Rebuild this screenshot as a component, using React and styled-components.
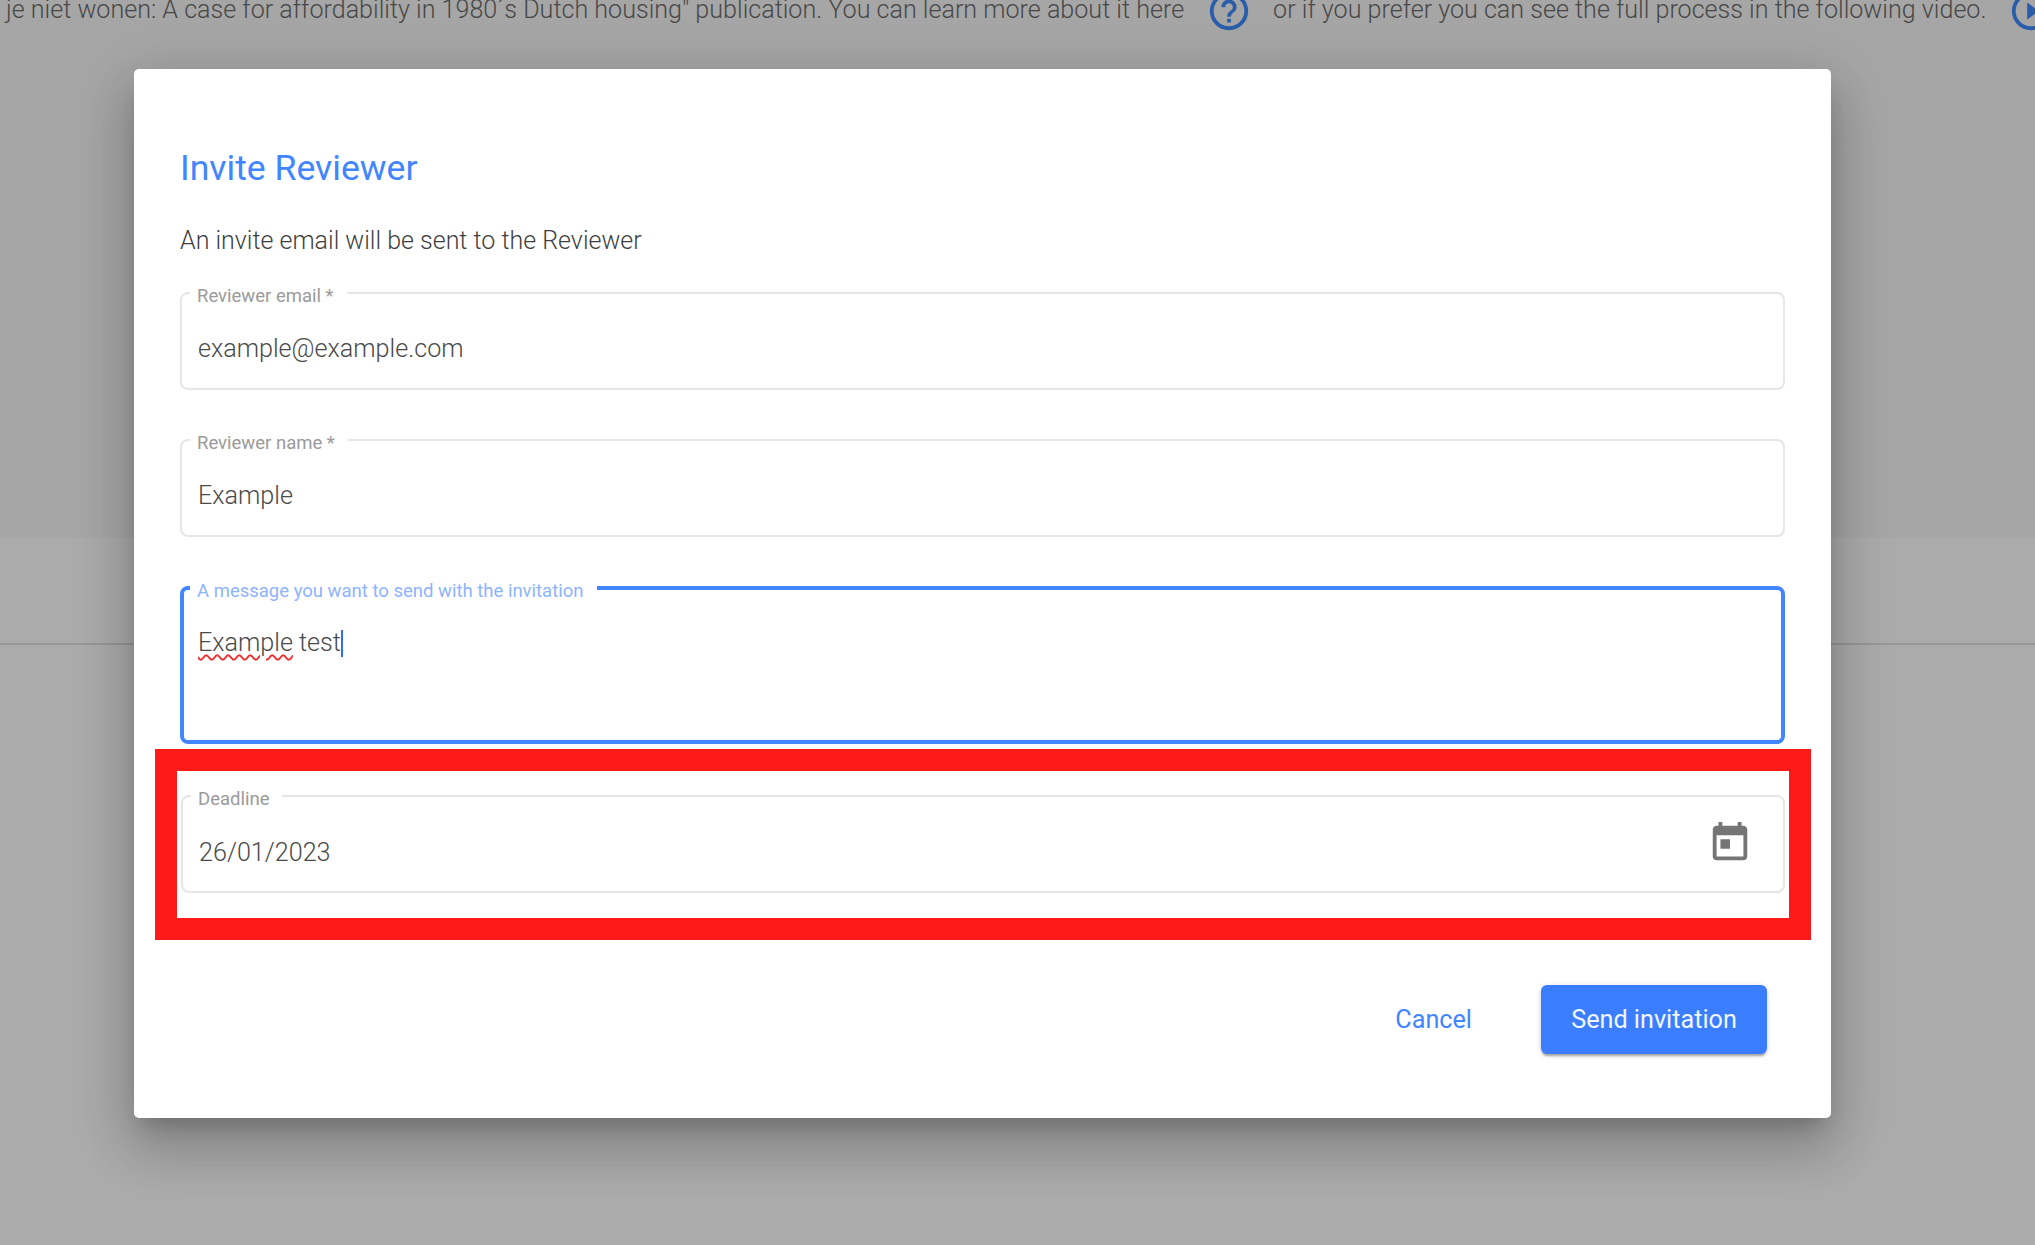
import React from 'react';
import styled, { createGlobalStyle } from 'styled-components';

const GlobalStyle = createGlobalStyle`
  html, body {
    margin: 0;
    padding: 0;
  }

  * {
    box-sizing: border-box;
  }

  body {
    font-family: Roboto, "Liberation Sans", sans-serif;
    background: #ffffff;
  }
`;

const Page = styled.div`
  position: relative;
  width: 2035px;
  height: 1245px;
  overflow: hidden;
  background: #ffffff;
`;

const TopSection = styled.section`
  display: flow-root;
  height: 538px;
  background: #f8f8f8;
`;

const IntroRow = styled.div`
  display: flex;
  align-items: center;
  gap: 21.5px;
  height: 46px;
  margin-top: -12px;
  padding-left: 6px;
  font-size: 25.1px;
  font-weight: 300;
  color: #6c6c6c;
  white-space: nowrap;
`;

const IntroText = styled.span`
  margin-bottom: 3px;
`;

const IntroIcon = styled.svg`
  flex: 0 0 46px;
  width: 46px;
  height: 46px;
  fill: #3f8cff;
`;

const MidSection = styled.section`
  height: 107px;
  border-bottom: 2px solid #e2e2e2;
`;

const Backdrop = styled.div`
  position: absolute;
  inset: 0;
  padding: 69px 0 0 134px;
  background: rgba(0, 0, 0, 0.33);
`;

const Dialog = styled.div`
  width: 1697px;
  height: 1049px;
  padding: 77px 46px 0;
  background: #ffffff;
  border-radius: 5px;
  box-shadow: 0 14px 20px -9px rgba(0, 0, 0, 0.2), 0 31px 49px 4px rgba(0, 0, 0, 0.14),
    0 12px 60px 10px rgba(0, 0, 0, 0.12);
`;

const Title = styled.h2`
  margin: 0;
  font-size: 35.6px;
  line-height: 44px;
  font-weight: 400;
  color: #4286ff;
`;

const Subtitle = styled.p`
  margin: 33px 0 0;
  font-size: 25px;
  line-height: 36px;
  font-weight: 300;
  color: #3f3f3f;
`;

const Fields = styled.div`
  display: flex;
  flex-direction: column;
  gap: 49px;
  margin-top: 33px;
`;

const Field = styled.fieldset`
  display: block;
  width: 100%;
  height: ${(p) => p.$height}px;
  margin: 0;
  padding: 0 15px 0 ${(p) => (p.$focused ? 14 : 16)}px;
  min-width: 0;
  border: ${(p) => (p.$focused ? '4px solid #4286ff' : '2px solid #e6e6e6')};
  border-radius: 8px;
`;

const Label = styled.legend`
  height: ${(p) => (p.$focused ? 4 : 2)}px;
  margin-left: -8px;
  padding: 0 13px 0 7px;
  font-size: 18.5px;
  line-height: ${(p) => (p.$focused ? 10 : 9)}px;
  font-weight: 400;
  color: ${(p) => (p.$focused ? '#8db4ff' : '#9a9a9a')};
`;

const Value = styled.div`
  margin-top: ${(p) => p.$top}px;
  font-size: 25.15px;
  line-height: 36px;
  font-weight: 300;
  color: #4a4a4a;
`;

const Misspelled = styled.span`
  text-decoration: underline wavy #f03030 1.5px;
  text-underline-offset: 3px;
`;

const Caret = styled.span`
  display: inline-block;
  width: 2px;
  height: 27px;
  vertical-align: -6px;
  background: #2f6fe8;
`;

const Highlight = styled.div`
  margin: 5px -26px 0 -25px;
  padding: 24px 4px 25px 4px;
  border: 22px solid #ff1a1a;
`;

const DateRow = styled.div`
  display: flex;
  justify-content: space-between;
  align-items: flex-start;
`;

const CalendarIcon = styled.svg`
  width: 46px;
  height: 46px;
  margin: 23px 15px 0 0;
  fill: #757575;
`;

const Actions = styled.div`
  display: flex;
  justify-content: flex-end;
  align-items: center;
  gap: 69px;
  margin: 45px 18px 0 0;
`;

const TextButton = styled.button`
  padding: 0;
  border: 0;
  background: none;
  font-family: inherit;
  font-size: 25.2px;
  font-weight: 400;
  color: #4286ff;
`;

const PrimaryButton = styled.button`
  width: 226px;
  height: 69px;
  padding: 0;
  border: 0;
  border-radius: 6px;
  background: #3a7eff;
  font-family: inherit;
  font-size: 25.2px;
  font-weight: 400;
  color: #f2f6ff;
  box-shadow: 0 4px 2px -2px rgba(0, 0, 0, 0.2), 0 2px 3px 0 rgba(0, 0, 0, 0.14),
    0 1px 6px 0 rgba(0, 0, 0, 0.12);
`;

const helpPath =
  'M11 18h2v-2h-2v2zm1-16C6.48 2 2 6.48 2 12s4.48 10 10 10 10-4.48 10-10S17.52 2 12 2zm0 18c-4.41 0-8-3.59-8-8s3.59-8 8-8 8 3.59 8 8-3.59 8-8 8zm0-14c-2.21 0-4 1.79-4 4h2c0-1.1.9-2 2-2s2 .9 2 2c0 2-3 1.75-3 5h2c0-2.25 3-2.5 3-5 0-2.21-1.79-4-4-4z';
const playPath =
  'M10 16.5l6-4.5-6-4.5v9zM12 2C6.48 2 2 6.48 2 12s4.48 10 10 10 10-4.48 10-10S17.52 2 12 2zm0 18c-4.41 0-8-3.59-8-8s3.59-8 8-8 8 3.59 8 8-3.59 8-8 8z';
const todayPath =
  'M19 3h-1V1h-2v2H8V1H6v2H5c-1.11 0-1.99.9-1.99 2L3 19c0 1.1.89 2 2 2h14c1.1 0 2-.9 2-2V5c0-1.1-.9-2-2-2zm0 16H5V8h14v11zM7 10h5v5H7z';

export default function App() {
  return (
    <Page>
      <GlobalStyle />
      <TopSection>
        <IntroRow>
          <IntroText>
            je niet wonen: A case for affordability in 1980´s Dutch housing" publication. You can
            learn more about it here
          </IntroText>
          <IntroIcon viewBox="0 0 24 24">
            <path d={helpPath} />
          </IntroIcon>
          <IntroText>or if you prefer you can see the full process in the following video.</IntroText>
          <IntroIcon viewBox="0 0 24 24">
            <path d={playPath} />
          </IntroIcon>
        </IntroRow>
      </TopSection>
      <MidSection />

      <Backdrop>
        <Dialog>
          <Title>Invite Reviewer</Title>
          <Subtitle>An invite email will be sent to the Reviewer</Subtitle>
          <Fields>
            <Field $height={98}>
              <Label>Reviewer email *</Label>
              <Value $top={37}>example@example.com</Value>
            </Field>
            <Field $height={98}>
              <Label>Reviewer name *</Label>
              <Value $top={37}>Example</Value>
            </Field>
            <Field $height={158} $focused>
              <Label $focused>A message you want to send with the invitation</Label>
              <Value $top={35}>
                <Misspelled>Example</Misspelled> test
                <Caret />
              </Value>
            </Field>
          </Fields>
          <Highlight>
            <Field $height={98}>
              <Label>Deadline</Label>
              <DateRow>
                <Value $top={38}>26/01/2023</Value>
                <CalendarIcon viewBox="0 0 24 24">
                  <path d={todayPath} />
                </CalendarIcon>
              </DateRow>
            </Field>
          </Highlight>
          <Actions>
            <TextButton>Cancel</TextButton>
            <PrimaryButton>Send invitation</PrimaryButton>
          </Actions>
        </Dialog>
      </Backdrop>
    </Page>
  );
}
